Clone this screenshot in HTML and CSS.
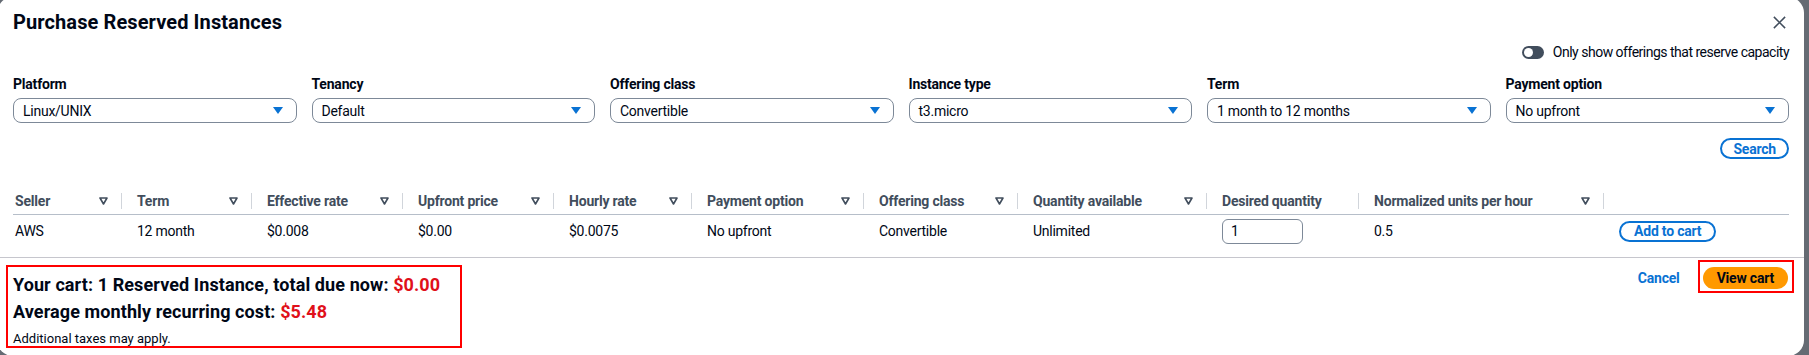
FILE: index.html
```html
<!DOCTYPE html>
<html lang="en">
<head>
    <meta charset="UTF-8">
    <meta name="viewport" content="width=device-width, initial-scale=1.0">
    <title>Purchase Reserved Instances</title>
    <link rel="stylesheet" href="styles.css">
</head>
<body>
    <div class="modal">
        <div class="modal-head">
            <h2 class="title">Purchase Reserved Instances</h2>
            <button class="close" aria-label="Close">
                <svg width="15" height="15" viewBox="0 0 16 16"><path d="M2 2L14 14M14 2L2 14" stroke="#414d5c" stroke-width="1.6" fill="none"/></svg>
            </button>
        </div>

        <div class="modal-body">
            <div class="toggle-row">
                <span class="toggle"><span class="knob"></span></span>
                <span>Only show offerings that reserve capacity</span>
            </div>

            <div class="filters">
                <div class="field">
                    <label>Platform</label>
                    <div class="select"><span>Linux/UNIX</span><svg class="caret" width="10" height="7" viewBox="0 0 10 7"><polygon points="0,0 10,0 5,7"/></svg></div>
                </div>
                <div class="field">
                    <label>Tenancy</label>
                    <div class="select"><span>Default</span><svg class="caret" width="10" height="7" viewBox="0 0 10 7"><polygon points="0,0 10,0 5,7"/></svg></div>
                </div>
                <div class="field">
                    <label>Offering class</label>
                    <div class="select"><span>Convertible</span><svg class="caret" width="10" height="7" viewBox="0 0 10 7"><polygon points="0,0 10,0 5,7"/></svg></div>
                </div>
                <div class="field">
                    <label>Instance type</label>
                    <div class="select"><span>t3.micro</span><svg class="caret" width="10" height="7" viewBox="0 0 10 7"><polygon points="0,0 10,0 5,7"/></svg></div>
                </div>
                <div class="field">
                    <label>Term</label>
                    <div class="select"><span>1 month to 12 months</span><svg class="caret" width="10" height="7" viewBox="0 0 10 7"><polygon points="0,0 10,0 5,7"/></svg></div>
                </div>
                <div class="field">
                    <label>Payment option</label>
                    <div class="select"><span>No upfront</span><svg class="caret" width="10" height="7" viewBox="0 0 10 7"><polygon points="0,0 10,0 5,7"/></svg></div>
                </div>
            </div>

            <div class="search-row">
                <button class="btn-line">Search</button>
            </div>

            <table class="offers">
                <colgroup>
                    <col style="width:109px"><col style="width:130px"><col style="width:151px"><col style="width:151px">
                    <col style="width:138px"><col style="width:172px"><col style="width:154px"><col style="width:189px">
                    <col style="width:152px"><col style="width:245px"><col>
                </colgroup>
                <thead>
                    <tr>
                        <th><div class="hcell">Seller<svg class="sort" width="9" height="8" viewBox="0 0 9 8"><polygon points="1,1 8,1 4.5,7"/></svg></div></th>
                        <th><div class="hcell">Term<svg class="sort" width="9" height="8" viewBox="0 0 9 8"><polygon points="1,1 8,1 4.5,7"/></svg></div></th>
                        <th><div class="hcell">Effective rate<svg class="sort" width="9" height="8" viewBox="0 0 9 8"><polygon points="1,1 8,1 4.5,7"/></svg></div></th>
                        <th><div class="hcell">Upfront price<svg class="sort" width="9" height="8" viewBox="0 0 9 8"><polygon points="1,1 8,1 4.5,7"/></svg></div></th>
                        <th><div class="hcell">Hourly rate<svg class="sort" width="9" height="8" viewBox="0 0 9 8"><polygon points="1,1 8,1 4.5,7"/></svg></div></th>
                        <th><div class="hcell">Payment option<svg class="sort" width="9" height="8" viewBox="0 0 9 8"><polygon points="1,1 8,1 4.5,7"/></svg></div></th>
                        <th><div class="hcell">Offering class<svg class="sort" width="9" height="8" viewBox="0 0 9 8"><polygon points="1,1 8,1 4.5,7"/></svg></div></th>
                        <th><div class="hcell">Quantity available<svg class="sort" width="9" height="8" viewBox="0 0 9 8"><polygon points="1,1 8,1 4.5,7"/></svg></div></th>
                        <th><div class="hcell">Desired quantity</div></th>
                        <th><div class="hcell">Normalized units per hour<svg class="sort" width="9" height="8" viewBox="0 0 9 8"><polygon points="1,1 8,1 4.5,7"/></svg></div></th>
                        <th></th>
                    </tr>
                </thead>
                <tbody>
                    <tr>
                        <td>AWS</td>
                        <td>12 month</td>
                        <td>$0.008</td>
                        <td>$0.00</td>
                        <td>$0.0075</td>
                        <td>No upfront</td>
                        <td>Convertible</td>
                        <td>Unlimited</td>
                        <td><div class="qty">1</div></td>
                        <td>0.5</td>
                        <td><button class="btn-line wide">Add to cart</button></td>
                    </tr>
                </tbody>
            </table>
        </div>

        <div class="modal-foot">
            <div class="cart-box">
                <div class="cart-line">Your cart: 1 Reserved Instance, total due now: <span class="price">$0.00</span></div>
                <div class="cart-line">Average monthly recurring cost: <span class="price">$5.48</span></div>
                <div class="taxes">Additional taxes may apply.</div>
            </div>
            <div class="actions">
                <a class="link-btn" href="#">Cancel</a>
                <div class="mark">
                    <button class="btn-primary">View cart</button>
                </div>
            </div>
        </div>
    </div>
</body>
</html>
```

FILE: styles.css
```css
body {
    margin: 0;
    height: 355px;
    overflow: hidden;
    background: #656b73;
    font-family: Roboto, "Open Sans", Arial, sans-serif;
    font-size: 14px;
    letter-spacing: -0.25px;
    color: #000716;
}
.modal {
    margin: -3px 0 0 -3px;
    width: 1807px;
    height: 359px;
    background: #fff;
    border-radius: 16px;
    overflow: hidden;
}
.modal-head {
    display: flex;
    justify-content: space-between;
    align-items: center;
    padding: 14px 14px 0 16px;
}
.title {
    margin: 0;
    font-size: 20px;
    line-height: 22px;
    font-weight: 700;
    letter-spacing: 0.1px;
}
.close {
    width: 22px;
    height: 22px;
    padding: 0;
    border: 0;
    background: none;
    display: flex;
    align-items: center;
    justify-content: center;
}
.modal-body {
    padding: 0 15px 0 16px;
}
.toggle-row {
    margin-top: 9px;
    height: 20px;
    display: flex;
    justify-content: flex-end;
    align-items: center;
    gap: 9px;
    letter-spacing: -0.5px;
}
.toggle {
    width: 22px;
    height: 13px;
    border-radius: 7px;
    background: #414d5c;
    display: flex;
    align-items: center;
    padding-left: 2px;
    box-sizing: border-box;
}
.knob {
    width: 9px;
    height: 9px;
    border-radius: 50%;
    background: #fff;
}
.filters {
    margin-top: 13px;
    display: grid;
    grid-template-columns: repeat(6, 1fr);
    column-gap: 15px;
}
.field label {
    display: block;
    font-weight: 700;
    line-height: 18px;
    margin-bottom: 5px;
    letter-spacing: -0.2px;
}
.select {
    height: 25px;
    box-sizing: border-box;
    border: 1px solid #7d8998;
    border-radius: 8px;
    padding: 0 13px 0 9px;
    display: flex;
    align-items: center;
    justify-content: space-between;
}
.caret { fill: #0972d3; }
.search-row {
    margin-top: 15px;
    display: flex;
    justify-content: flex-end;
}
.btn-line {
    height: 21px;
    padding: 0 11px;
    border: 2px solid #0972d3;
    border-radius: 20px;
    background: #fff;
    color: #0972d3;
    font-family: inherit;
    font-size: 14px;
    font-weight: 700;
    letter-spacing: -0.2px;
    display: flex;
    align-items: center;
}
.btn-line.wide { padding: 0 13px; }
.offers {
    margin-top: 28px;
    margin-bottom: 10px;
    width: 100%;
    border-collapse: collapse;
    table-layout: fixed;
}
.offers th {
    height: 27px;
    padding: 0 0 0 15px;
    border-bottom: 1px solid #b6bec9;
    text-align: left;
    font-weight: 700;
    color: #414d5c;
    letter-spacing: -0.2px;
    vertical-align: middle;
}
.offers th:first-child,
.offers td:first-child { padding-left: 2px; }
.hcell {
    height: 16px;
    display: flex;
    align-items: center;
    justify-content: space-between;
    padding-right: 13px;
    border-right: 1px solid #d1d5db;
    white-space: nowrap;
}
.sort {
    fill: #fff;
    stroke: #414d5c;
    stroke-width: 1.6;
    stroke-linejoin: round;
}
.offers td {
    height: 32px;
    padding: 0 0 0 15px;
    vertical-align: middle;
    white-space: nowrap;
}
.qty {
    width: 81px;
    height: 25px;
    box-sizing: border-box;
    border: 1px solid #7d8998;
    border-radius: 6px;
    padding-left: 8px;
    display: flex;
    align-items: center;
}
.modal-foot {
    border-top: 1px solid #c6c6cd;
    display: flex;
    justify-content: space-between;
    align-items: flex-start;
    padding: 0 10px 0 9px;
}
.cart-box {
    margin-top: 7px;
    width: 456px;
    box-sizing: border-box;
    border: 2px solid #ff0000;
    padding: 4px 0 0 5px;
}
.cart-line {
    font-size: 18px;
    line-height: 27px;
    font-weight: 700;
    letter-spacing: 0.1px;
}
.price { color: #e0101a; }
.taxes {
    margin-top: 6px;
    font-size: 13px;
    line-height: 15px;
    letter-spacing: 0;
}
.actions {
    margin-top: 2px;
    display: flex;
    align-items: center;
    gap: 18px;
}
.link-btn {
    color: #0972d3;
    font-weight: 700;
    text-decoration: none;
    letter-spacing: -0.2px;
    margin-top: 3px;
}
.mark {
    border: 2px solid #ff0000;
    padding: 5px 4px 2px 3px;
}
.btn-primary {
    height: 22px;
    padding: 0 14px;
    border: 0;
    border-radius: 20px;
    background: #ff9900;
    color: #000716;
    font-family: inherit;
    font-size: 14px;
    font-weight: 700;
    letter-spacing: -0.2px;
}
```
